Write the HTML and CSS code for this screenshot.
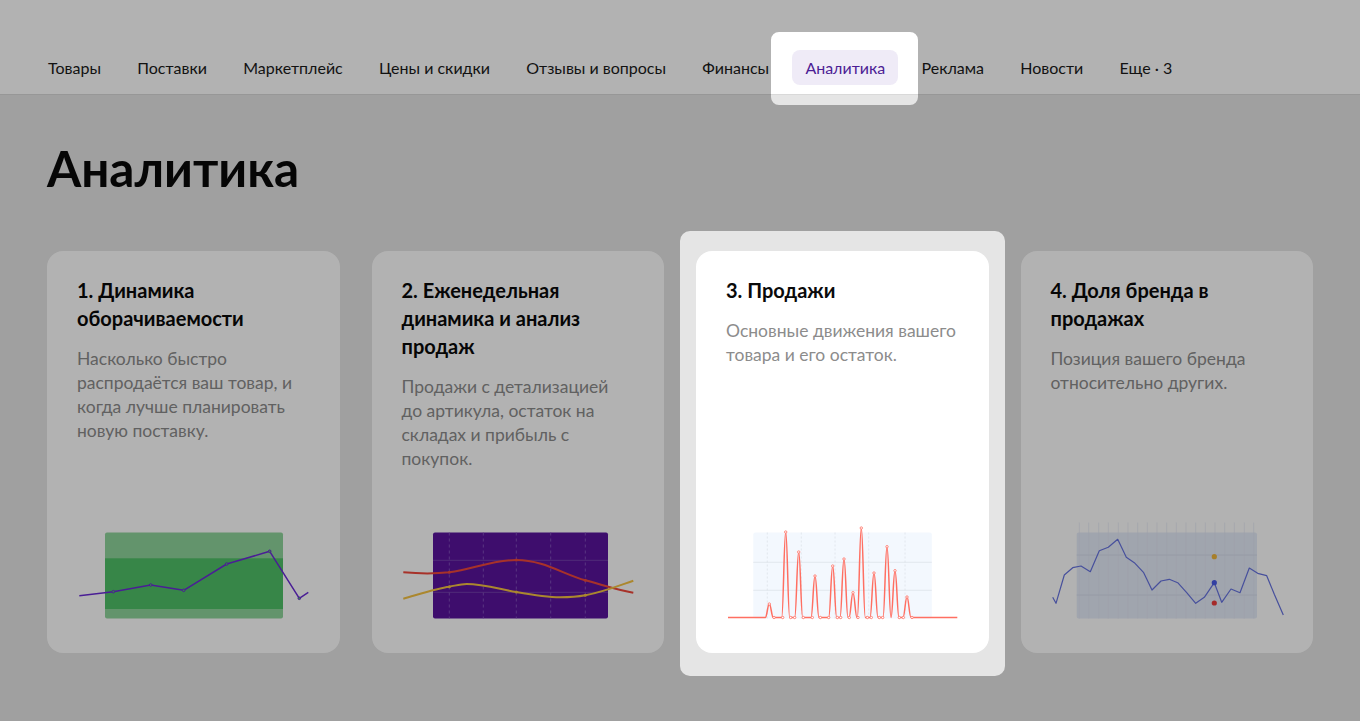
FILE: index.html
```html
<!DOCTYPE html>
<html lang="ru">
<head>
<meta charset="utf-8">
<title>Аналитика</title>
<link rel="stylesheet" href="styles.css">
</head>
<body>
<header class="header">
  <nav class="nav">
    <a class="nav-item">Товары</a>
    <a class="nav-item">Поставки</a>
    <a class="nav-item">Маркетплейс</a>
    <a class="nav-item">Цены и скидки</a>
    <a class="nav-item">Отзывы и вопросы</a>
    <a class="nav-item">Финансы</a>
    <a class="nav-item active">Аналитика</a>
    <a class="nav-item">Реклама</a>
    <a class="nav-item">Новости</a>
    <a class="nav-item">Еще · 3</a>
  </nav>
</header>
<main class="page">
  <h1 class="title">Аналитика</h1>
  <div class="cards">
    <section class="card">
      <h2 class="card-title">1. Динамика оборачиваемости</h2>
      <p class="card-desc">Насколько быстро распродаётся ваш товар, и когда лучше планировать новую поставку.</p>
      <svg class="chart" viewBox="0 0 232 100" width="232" height="100">
        <rect x="27" y="10.5" width="178" height="86" rx="2" fill="#8fd49b"/>
        <rect x="27" y="36.3" width="178" height="50.7" fill="#4fc167"/>
        <polyline points="1.3,73.7 35.3,69.7 72.7,63 105.7,68.3 148.7,42 191.7,29.3 221.3,76.3 230.3,70.3" fill="none" stroke="#6a2bd6" stroke-width="1.5" stroke-linejoin="round"/>
        <g fill="#4fc167" stroke="#6a2bd6" stroke-width="1">
          <circle cx="35.3" cy="69.7" r="1.3"/>
          <circle cx="72.7" cy="63" r="1.3"/>
          <circle cx="105.7" cy="68.3" r="1.3"/>
          <circle cx="148.7" cy="42" r="1.3"/>
          <circle cx="191.7" cy="29.3" r="1.3"/>
          <circle cx="221.3" cy="76.3" r="1.3"/>
        </g>
      </svg>
    </section>
    <section class="card">
      <h2 class="card-title">2. Еженедельная динамика и анализ продаж</h2>
      <p class="card-desc">Продажи с детализацией до артикула, остаток на складах и прибыль с покупок.</p>
      <svg class="chart" viewBox="0 0 232 100" width="232" height="100">
        <rect x="30" y="10.5" width="175" height="86" rx="2" fill="#59149d"/>
        <g stroke="#8a5cc0" stroke-width="0.8" stroke-dasharray="3 3">
          <line x1="46.3" y1="10.5" x2="46.3" y2="96.5"/>
          <line x1="80.3" y1="10.5" x2="80.3" y2="96.5"/>
          <line x1="113.3" y1="10.5" x2="113.3" y2="96.5"/>
          <line x1="147.7" y1="10.5" x2="147.7" y2="96.5"/>
          <line x1="182.3" y1="10.5" x2="182.3" y2="96.5"/>
        </g>
        <g stroke="#7b4ab3" stroke-width="0.8">
          <line x1="30" y1="38.3" x2="205" y2="38.3"/>
          <line x1="30" y1="70.3" x2="205" y2="70.3"/>
        </g>
        <path d="M0.3 50.3 C20 52 30 52 46.3 50.3 C70 47 90 38 113.3 38 C140 38 160 52 182.3 58.3 C200 63 215 68 230.3 70.7" fill="none" stroke="#f0483c" stroke-width="2"/>
        <path d="M0.3 76.7 C20 71 35 66 46.3 64.7 C55 63 58 62 63.7 62 C80 62 100 68 113.3 70 C130 73 145 75.3 157 75.3 C170 75.3 176 74.5 182.3 73.3 C200 70 215 64 230.3 58.7" fill="none" stroke="#f5c242" stroke-width="2"/>
        <g fill="#f0483c">
          <circle cx="46.3" cy="50.3" r="1.5"/>
          <circle cx="113.3" cy="38" r="1.5"/>
          <circle cx="182.3" cy="58.3" r="1.5"/>
        </g>
        <g fill="#f5c242">
          <circle cx="46.3" cy="64.7" r="1.5"/>
          <circle cx="113.3" cy="70" r="1.5"/>
          <circle cx="182.3" cy="73.3" r="1.5"/>
        </g>
      </svg>
    </section>
    <section class="card">
      <h2 class="card-title">3. Продажи</h2>
      <p class="card-desc">Основные движения вашего товара и его остаток.</p>
      <svg class="chart" viewBox="0 0 232 100" width="232" height="100">
        <rect x="26.3" y="10.5" width="178.5" height="86" rx="2" fill="#f3f8fe"/>
        <g stroke="#dde2ea" stroke-width="0.8" stroke-dasharray="2 2">
          <line x1="40.3" y1="10.5" x2="40.3" y2="96.5"/>
          <line x1="74.3" y1="10.5" x2="74.3" y2="96.5"/>
          <line x1="108" y1="10.5" x2="108" y2="96.5"/>
          <line x1="141.7" y1="10.5" x2="141.7" y2="96.5"/>
          <line x1="178" y1="10.5" x2="178" y2="96.5"/>
        </g>
        <g stroke="#dde2ea" stroke-width="0.8">
          <line x1="26.3" y1="40.3" x2="204.8" y2="40.3"/>
          <line x1="26.3" y1="68.3" x2="204.8" y2="68.3"/>
        </g>
        <path d="M1 95.5 H38.3 C40 95.5 40.6 82 42.3 82 C44 82 44.6 95.5 46.3 95.5
                 H54.7 C56.4 95.5 57 10 58.7 10 C60.4 10 61 95.5 62.7 95.5
                 H67.7 C69.4 95.5 70 30 71.7 30 C73.4 30 74 95.5 75.7 95.5
                 H84 C85.7 95.5 86.3 54 88 54 C89.7 54 90.3 95.5 92 95.5
                 H101.7 C103.4 95.5 104 44 105.7 44 C107.4 44 108 95.5 109.7 95.5
                 H113 C114.7 95.5 115.3 37 117 37 C118.7 37 119.3 95.5 121 95.5
                 H122 C123.7 95.5 124.3 70.7 126 70.7 C127.7 70.7 128.3 95.5 130 95.5
                 H130.3 C132 95.5 132.6 6 134.3 6 C136 6 136.6 95.5 138.3 95.5
                 H143 C144.7 95.5 145.3 51 147 51 C148.7 51 149.3 95.5 151 95.5
                 H156 C157.7 95.5 158.3 24.7 160 24.7 C161.7 24.7 162.3 95.5 164 95.5
                 C165.7 95.5 166.3 48.7 168 48.7 C169.7 48.7 170.3 95.5 172 95.5
                 H176 C177.7 95.5 178.3 75 180 75 C181.7 75 182.3 95.5 184 95.5
                 H230.3" fill="none" stroke="#ff6f62" stroke-width="1.5" stroke-linejoin="round"/>
        <g fill="#fff" stroke="#ff6f62" stroke-width="0.8">
          <circle cx="42.3" cy="82" r="1.2"/>
          <circle cx="58.7" cy="10" r="1.2"/>
          <circle cx="71.7" cy="30" r="1.2"/>
          <circle cx="88" cy="54" r="1.2"/>
          <circle cx="105.7" cy="44" r="1.2"/>
          <circle cx="117" cy="37" r="1.2"/>
          <circle cx="126" cy="70.7" r="1.2"/>
          <circle cx="134.3" cy="6" r="1.2"/>
          <circle cx="147" cy="51" r="1.2"/>
          <circle cx="160" cy="24.7" r="1.2"/>
          <circle cx="168" cy="48.7" r="1.2"/>
          <circle cx="180" cy="75" r="1.2"/>
          <circle cx="47" cy="95.5" r="1.2"/>
          <circle cx="55.7" cy="95.5" r="1.2"/>
          <circle cx="63.7" cy="95.5" r="1.2"/>
          <circle cx="67.7" cy="95.5" r="1.2"/>
          <circle cx="76.3" cy="95.5" r="1.2"/>
          <circle cx="85.3" cy="95.5" r="1.2"/>
          <circle cx="93.3" cy="95.5" r="1.2"/>
          <circle cx="101.7" cy="95.5" r="1.2"/>
          <circle cx="110.3" cy="95.5" r="1.2"/>
          <circle cx="113.7" cy="95.5" r="1.2"/>
          <circle cx="122.3" cy="95.5" r="1.2"/>
          <circle cx="131" cy="95.5" r="1.2"/>
          <circle cx="140.3" cy="95.5" r="1.2"/>
          <circle cx="144.3" cy="95.5" r="1.2"/>
          <circle cx="152.3" cy="95.5" r="1.2"/>
          <circle cx="155.7" cy="95.5" r="1.2"/>
          <circle cx="172.3" cy="95.5" r="1.2"/>
          <circle cx="176.3" cy="95.5" r="1.2"/>
          <circle cx="185" cy="95.5" r="1.2"/>
        </g>
      </svg>
    </section>
    <section class="card">
      <h2 class="card-title">4. Доля бренда в продажах</h2>
      <p class="card-desc">Позиция вашего бренда относительно других.</p>
      <svg class="chart" viewBox="0 0 232 100" width="232" height="100">
        <rect x="24.7" y="10.5" width="180.3" height="86" rx="2" fill="#e6ecf9"/>
        <g stroke="#e1e6f2" stroke-width="0.6">
          <line x1="27.3" y1="0.5" x2="27.3" y2="96.5"/>
          <line x1="36.7" y1="0.5" x2="36.7" y2="96.5"/>
          <line x1="46.7" y1="0.5" x2="46.7" y2="96.5"/>
          <line x1="56.3" y1="0.5" x2="56.3" y2="96.5"/>
          <line x1="66.3" y1="0.5" x2="66.3" y2="96.5"/>
          <line x1="76" y1="0.5" x2="76" y2="96.5"/>
          <line x1="85.7" y1="0.5" x2="85.7" y2="96.5"/>
          <line x1="95.3" y1="0.5" x2="95.3" y2="96.5"/>
          <line x1="105" y1="0.5" x2="105" y2="96.5"/>
          <line x1="114.7" y1="0.5" x2="114.7" y2="96.5"/>
          <line x1="124.3" y1="0.5" x2="124.3" y2="96.5"/>
          <line x1="134" y1="0.5" x2="134" y2="96.5"/>
          <line x1="143.7" y1="0.5" x2="143.7" y2="96.5"/>
          <line x1="153.3" y1="0.5" x2="153.3" y2="96.5"/>
          <line x1="163" y1="0.5" x2="163" y2="96.5"/>
          <line x1="172.7" y1="0.5" x2="172.7" y2="96.5"/>
          <line x1="182.3" y1="0.5" x2="182.3" y2="96.5"/>
          <line x1="192.3" y1="0.5" x2="192.3" y2="96.5"/>
          <line x1="201.7" y1="0.5" x2="201.7" y2="96.5"/>
        </g>
        <g stroke="#d3dbec" stroke-width="0.8">
          <line x1="24.7" y1="33" x2="205" y2="33"/>
          <line x1="24.7" y1="73" x2="205" y2="73"/>
        </g>
        <polyline points="0.7,75.3 4,81.3 12.3,53 20.7,45.7 29,44 38.3,49.7 47.3,28.7 56.3,25.3 65.7,17.3 74.3,35.3 82.3,40.7 91.7,50.7 100,68 109,59 117.3,57.3 125.7,60.7 134.7,70.7 143.7,81.3 152.3,75.3 162.3,60.7 169.7,80.3 179,67 188,70.7 197.3,46 205.7,51.3 214.7,53.7 222.3,72.3 231.3,93" fill="none" stroke="#6673e0" stroke-width="1.2" stroke-linejoin="round"/>
        <circle cx="162.3" cy="34.7" r="2.6" fill="#f0b63e"/>
        <circle cx="162.3" cy="60.7" r="2.6" fill="#4a5ce8"/>
        <circle cx="162.3" cy="81" r="2.6" fill="#ec3d3d"/>
      </svg>
    </section>
  </div>
</main>
<svg class="overlay" width="1360" height="721" viewBox="0 0 1360 721" aria-hidden="true">
  <path fill="rgba(0,0,0,0.3)" fill-rule="evenodd" d="M0 0H1360V721H0Z
    M779 32H910A8 8 0 0 1 918 40V97A8 8 0 0 1 910 105H779A8 8 0 0 1 771 97V40A8 8 0 0 1 779 32Z
    M690 231H995A10 10 0 0 1 1005 241V666A10 10 0 0 1 995 676H690A10 10 0 0 1 680 666V241A10 10 0 0 1 690 231Z"/>
</svg>
</body>
</html>
```
FILE: styles.css
```css
* { box-sizing: border-box; }
html, body {
  margin: 0;
  padding: 0;
}
body {
  width: 1360px;
  height: 721px;
  overflow: hidden;
  background: #e5e5e5;
  font-family: Lato, "Noto Sans", sans-serif;
  color: #0a0a0a;
}
.header {
  background: #fff;
  border-bottom: 1px solid #d9d9d9;
  padding: 50px 35px 9px;
}
.nav {
  display: flex;
  gap: 10.3px;
}
.nav-item {
  display: block;
  padding: 8px 13px;
  font-size: 16px;
  line-height: 19px;
  color: #1a1a1a;
  border-radius: 8px;
  text-decoration: none;
  white-space: nowrap;
}
.nav-item.active {
  background: #efebf7;
  color: #4c1d95;
}
.page {
  padding: 0 47px;
}
.title {
  margin: 44px 0 0;
  font-size: 49.5px;
  line-height: 58px;
  font-weight: 700;
  color: #0a0a0a;
}
.cards {
  display: grid;
  grid-template-columns: repeat(4, minmax(0, 1fr));
  gap: 32px;
  margin-top: 54px;
}
.card {
  min-width: 0;
  background: #fff;
  border-radius: 16px;
  height: 402px;
  padding: 25px 31.5px 31px 30px;
  display: flex;
  flex-direction: column;
}
.card-title {
  margin: 0;
  font-size: 20px;
  line-height: 28px;
  font-weight: 700;
  color: #0a0a0a;
}
.card-desc {
  margin: 15px 0 0;
  font-size: 17.5px;
  line-height: 24px;
  color: #8c8c8c;
}
.chart {
  display: block;
  flex: none;
  margin-top: auto;
  margin-left: 1px;
  align-self: flex-start;
  overflow: visible;
}
.overlay {
  position: fixed;
  left: 0;
  top: 0;
  pointer-events: none;
}
```
